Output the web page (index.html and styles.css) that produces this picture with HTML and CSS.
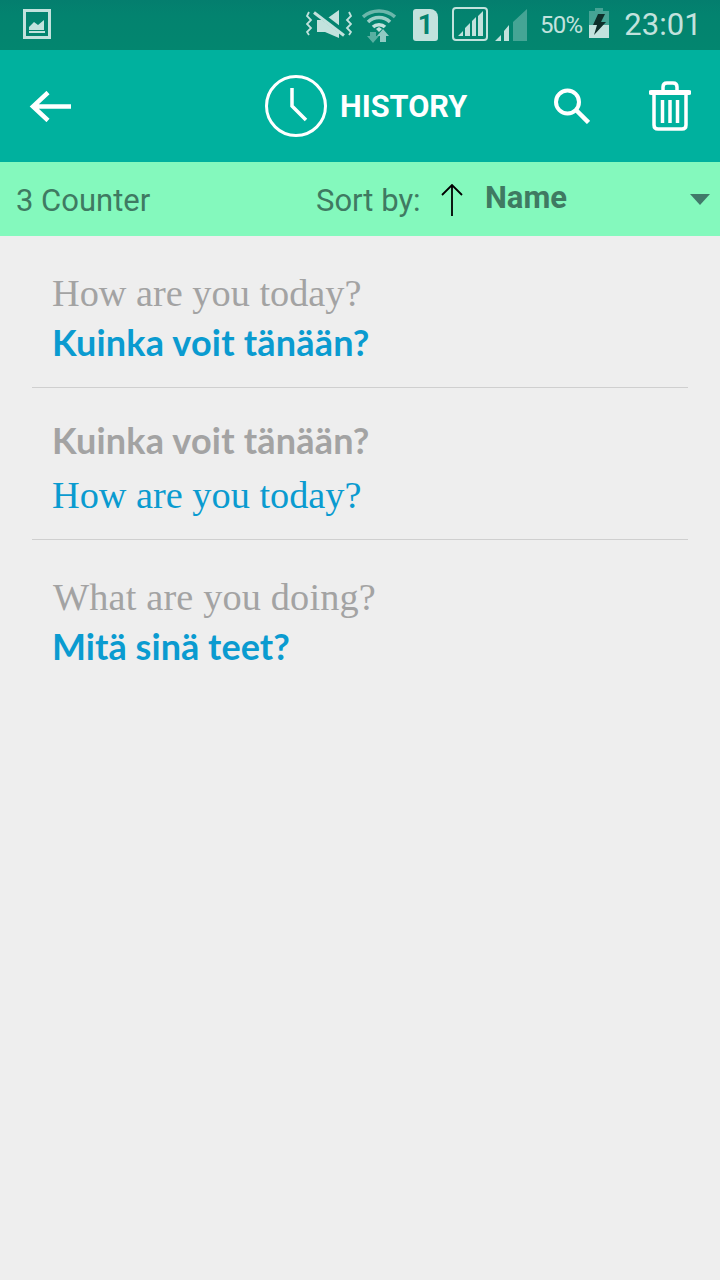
FILE: index.html
```html
<!DOCTYPE html>
<html lang="en">
<head>
<meta charset="utf-8">
<title>History</title>
<link rel="stylesheet" href="styles.css">
</head>
<body>
<div class="screen">
  <header class="status">
    <svg class="ic-image" width="28" height="30" viewBox="0 0 28 30"><path d="M1.500 1.500h25v27h-25z" fill="none" stroke="#c2e2dd" stroke-width="3"/><path d="M6 21v-3l5-5 4 3 6-5v10z" fill="#c2e2dd"/><path d="M6 23h16" stroke="#c2e2dd" stroke-width="2"/></svg>
    <svg class="ic-mute" width="46" height="30" viewBox="0 0 46 30"><g fill="none" stroke="#c2e2dd" stroke-width="1.800"><path d="M3 3L1 7l4 4-4 4 4 4-4 4 2 3"/><path d="M43 3l2 4-4 4 4 4-4 4 4 4-2 3"/></g><path d="M11 11h8L33 1v28L19 23h-8z" fill="#c2e2dd"/><path d="M8 1l30 23" stroke="#03836f" stroke-width="6"/><path d="M8 3.500l30 23" stroke="#c2e2dd" stroke-width="3"/></svg>
    <svg class="ic-wifi" width="34" height="34" viewBox="0 0 34 34"><g fill="none" stroke="#c2e2dd"><path d="M1 8C10 0 24 0 33 8" stroke-width="3.500" opacity=".55"/><path d="M6 13c6-6 16-6 22 0" stroke-width="3.500" opacity=".8"/><path d="M11 18c3-3 9-3 12 0" stroke-width="3.500"/></g><path d="M14 20l3-2 3 2-3 3z" fill="#c2e2dd"/><path d="M8 23h6v4h3l-6 7-6-7h3z" fill="#c2e2dd" opacity=".45"/><path d="M21 20l6 7h-3v6h-6v-6h-3z" fill="#c2e2dd" opacity=".75"/></svg>
    <span class="ic-sim"><span class="sim-num">1</span></span>
    <svg class="ic-sig1" width="36" height="34" viewBox="0 0 36 34"><rect x="1" y="1" width="34" height="32" rx="3" fill="none" stroke="#c2e2dd" stroke-width="2"/><path d="M6 29l5-5v5zM13 29v-8l5-5v13zM20 29V14l4-4v19zM26 29V9l5-5v25z" fill="#c2e2dd"/></svg>
    <svg class="ic-sig2" width="32" height="32" viewBox="0 0 32 32"><path d="M0 32l6-6v6zM9 32V22l5-6v16z" fill="#c2e2dd"/><path d="M18 32V13L32 0v32z" fill="#c2e2dd" opacity=".35"/></svg>
    <span class="pct">50%</span>
    <svg class="ic-batt" width="20" height="30" viewBox="0 0 20 30"><path d="M6 0h8v3h6v27H0V3h6z" fill="#c2e2dd" opacity=".35"/><path d="M0 17h20v13H0z" fill="#c2e2dd"/><path d="M9 6h7l-4 8h5L5 27l3-10H4z" fill="#0e2f2a"/></svg>
    <span class="time">23:01</span>
  </header>

  <nav class="appbar">
    <svg class="ic-back" width="42" height="31" viewBox="0 0 42 31"><path d="M42 15.500H4M19 1.500L4 15.500l15 14" fill="none" stroke="#fff" stroke-width="4.500"/></svg>
    <svg class="ic-clock" width="62" height="62" viewBox="0 0 62 62"><circle cx="31" cy="31" r="29.500" fill="none" stroke="#fff" stroke-width="3"/><path d="M27 13v18l14 14" fill="none" stroke="#fff" stroke-width="3.500"/></svg>
    <span class="title">HISTORY</span>
    <svg class="ic-search" width="37" height="36" viewBox="0 0 37 36"><circle cx="14.500" cy="14" r="11.500" fill="none" stroke="#fff" stroke-width="4"/><path d="M23 22l12.500 12.500" stroke="#fff" stroke-width="4.500"/></svg>
    <svg class="ic-trash" width="42" height="50" viewBox="0 0 42 50"><path d="M2 11.500h38" stroke="#fff" stroke-width="5" stroke-linecap="round"/><path d="M14 9V6q0-4 4-4h6q4 0 4 4v3" fill="none" stroke="#fff" stroke-width="3.500"/><path d="M5 13v31q0 4 4 4h24q4 0 4-4V13" fill="none" stroke="#fff" stroke-width="3.500"/><path d="M13.500 19v23M21 19v23M28.500 19v23" stroke="#fff" stroke-width="3.500"/></svg>
  </nav>

  <section class="sortbar">
    <span class="count">3 Counter</span>
    <span class="sort-label">Sort by:</span>
    <svg class="ic-up" width="22" height="32" viewBox="0 0 22 32"><path d="M11 32V1M1 11L11 1l10 10" fill="none" stroke="#000" stroke-width="1.800"/></svg>
    <span class="sort-value">Name</span>
    <svg class="ic-drop" width="20" height="11" viewBox="0 0 20 11"><path d="M0 0h20L10 11z" fill="#41796a"/></svg>
  </section>

  <main class="list">
    <article class="item first">
      <p class="line serif muted">How are you today?</p>
      <p class="line hand blue">Kuinka voit tänään?</p>
    </article>
    <article class="item second">
      <p class="line hand muted">Kuinka voit tänään?</p>
      <p class="line serif blue">How are you today?</p>
    </article>
    <article class="item third">
      <p class="line serif muted">What are you doing?</p>
      <p class="line hand blue">Mitä sinä teet?</p>
    </article>
  </main>
</div>
</body>
</html>
```

FILE: styles.css
```css
* { box-sizing: border-box; }
html, body { margin: 0; padding: 0; }
body { width: 720px; height: 1280px; overflow: hidden; background: #eeeeee; font-family: Roboto, sans-serif; }
.screen { display: flex; flex-direction: column; height: 1280px; }

.status { height: 50px; flex: none; display: flex; align-items: center; background: linear-gradient(#047e6e, #03836f 30%, #03866f); color: #c2e2dd; }
.status svg, .appbar svg, .sortbar svg { flex: none; display: block; }
.ic-image { margin-left: 23px; margin-top: -2px; }
.ic-mute { margin-left: 255px; margin-top: -3px; }
.ic-wifi { margin-left: 10px; margin-top: 2px; }
.ic-sim { margin-left: 17px; width: 25px; height: 32px; background: #c2e2dd; border-radius: 3px 8px 3px 3px; display: flex; align-items: center; justify-content: center; }
.sim-num { font: 700 27px/32px Roboto, sans-serif; color: #03836f; }
.ic-sig1 { margin-left: 14px; margin-top: -2px; }
.ic-sig2 { margin-left: 7px; }
.pct { margin-left: 13px; font-size: 24px; line-height: 50px; letter-spacing: -0.8px; }
.ic-batt { margin-left: 7px; margin-top: -4px; }
.time { margin-left: 15px; font-size: 31px; line-height: 50px; letter-spacing: 0.1px; }

.appbar { height: 112px; flex: none; display: flex; align-items: center; background: #00b19e; }
.ic-back { margin-left: 29px; }
.ic-clock { margin-left: 194px; }
.title { margin-left: 13px; width: 127px; font-size: 30.700px; font-weight: 700; color: #fff; white-space: nowrap; }
.ic-search { margin-left: 86px; }
.ic-trash { margin-left: 59px; }

.sortbar { height: 74px; flex: none; display: flex; align-items: center; background: #84f9bd; color: #3f7a62; }
.count { margin-left: 16px; width: 300px; font-size: 31px; margin-top: 2px; }
.sort-label { width: 125px; font-size: 31px; margin-top: 2px; }
.ic-up { margin-top: 1px; margin-left: 0; }
.sort-value { margin-left: 22px; width: 205px; font-size: 31px; font-weight: 700; margin-top: -4px; }

.list { flex: 1; display: flex; flex-direction: column; padding: 0 32px; }
.item { height: 152px; border-bottom: 1px solid #cfcfcf; padding: 32px 0 0 20px; }
.item.second { padding-top: 27px; }
.item.third { border-bottom: 0; padding-left: 21px; }
.line { margin: 0; white-space: nowrap; line-height: 50px; }
.serif { font-family: "Liberation Serif", serif; font-size: 38.300px; }
.hand { font-family: Lato, sans-serif; font-size: 36px; font-weight: 700; letter-spacing: 0.2px; margin-top: -1px; }
.second .hand { margin-top: 0; }
.second .serif { margin-top: 5px; }
.third .serif { letter-spacing: 0.15px; }
.third .hand { margin-left: -1px; letter-spacing: 0.05px; }
.muted { color: #a3a3a3; }
.blue { color: #0a9bd0; }
```
